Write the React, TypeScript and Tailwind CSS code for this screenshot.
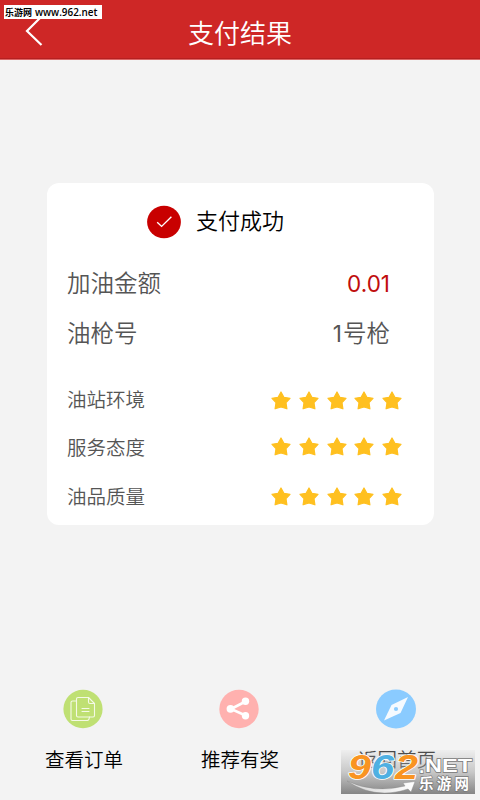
import * as React from "react"
import clsx from "clsx"

const ratings = [
  { label: "油站环境", height: "h-[47px]", starOffset: "pt-[3px]" },
  { label: "服务态度", height: "h-[49px]", starOffset: "pt-0" },
  { label: "油品质量", height: "h-[49px]", starOffset: "pt-px" },
]

function Star() {
  return (
    <svg viewBox="0 0 20 19" className="h-[19px] w-5" fill="#ffc020" stroke="#ffc020" strokeWidth="1.2" strokeLinejoin="round">
      <path d="M10 1 12.9 6.3 19 7.3 15 11.7 15.9 17.8 10 16 4.1 17.8 5 11.7 1 7.3 7.1 6.3Z" />
    </svg>
  )
}

function CheckBadge() {
  return (
    <svg viewBox="0 0 34 34" className="mt-0.5 size-[34px]" fill="none">
      <ellipse cx="17" cy="17" rx="16.9" ry="16.2" fill="#c80000" />
      <path d="M10.2 17.2 14.6 21.4 24.4 11.8" stroke="#fff" strokeWidth="1.4" />
    </svg>
  )
}

function OrdersIcon() {
  return (
    <svg viewBox="0 0 40 40" className="size-10" fill="none">
      <ellipse cx="20" cy="20" rx="19.6" ry="19.2" fill="#bfe073" />
      <g stroke="#f4f9e6" strokeWidth="1.1" strokeLinejoin="round" strokeLinecap="round">
        <path d="M13 12H9.5Q8 12 8 13.5V30Q8 31.5 9.5 31.5H24.5Q26 31.5 26.5 28" />
        <path d="M15 8.5H25.5L31.5 14.5V26.5Q31.5 28 30 28H15Q13.5 28 13.5 26.5V10Q13.5 8.5 15 8.5Z" />
        <path d="M25.5 8.5V13Q25.5 14.5 27 14.5H31.5M19 19.5H26M19 22.5H26" />
      </g>
    </svg>
  )
}

function ShareIcon() {
  return (
    <svg viewBox="0 0 40 40" className="size-10">
      <ellipse cx="20" cy="20" rx="19.7" ry="19.2" fill="#ffb1af" />
      <path d="M26.5 12.5 12 20 26.5 26.5" fill="none" stroke="#fff" strokeWidth="2.6" />
      <g fill="#fff">
        <circle cx="26.5" cy="12.3" r="3.7" />
        <circle cx="11.5" cy="19.8" r="3.9" />
        <circle cx="26.5" cy="26.8" r="3.7" />
      </g>
    </svg>
  )
}

function CompassIcon() {
  return (
    <svg viewBox="0 0 40 40" className="size-10">
      <ellipse cx="20" cy="20" rx="20" ry="19.5" fill="#8acbff" />
      <path d="M32 8 24.5 24 8 31.5 15.5 16Z" fill="#f5faff" />
      <circle cx="20" cy="20" r="2.1" fill="#8acbff" />
    </svg>
  )
}

function Action({ icon, label, className }: { icon: React.ReactNode; label: string; className?: string }) {
  return (
    <button className={clsx("flex w-[78px] flex-col items-center", className)}>
      <span className="-ml-[3px]">{icon}</span>
      <span className="mt-[15px] text-[19.5px] leading-[30px] whitespace-nowrap text-black">{label}</span>
    </button>
  )
}

function SiteBadge() {
  return (
    <div className="absolute right-[5px] bottom-[6px] h-11 w-[134px] bg-linear-to-b from-[#e4e4e4]/30 via-[#b5b5b5]/70 to-[#858585]">
      <svg viewBox="0 0 134 44" className="size-full overflow-visible">
        <defs>
          <linearGradient id="swoosh" x1="0" x2="1">
            <stop offset="0" stopColor="#fff" stopOpacity="0.6" />
            <stop offset="1" stopColor="#fff" />
          </linearGradient>
        </defs>
        <path d="M6 31Q34 44 64 36L62 33 74 31.5 70 42 67 39Q34 50 6 31Z" fill="url(#swoosh)" stroke="#888" strokeWidth="0.4" />
        <g fontFamily="Liberation Sans" fontWeight="bold" fontStyle="italic" fontSize="35" stroke="#fff" strokeWidth="1.6" paintOrder="stroke" strokeLinejoin="round">
          <text x="7" y="28.5" textLength="23" lengthAdjust="spacingAndGlyphs" fill="#f99422">9</text>
          <text x="30" y="28.5" textLength="23" lengthAdjust="spacingAndGlyphs" fill="#4fb0e2">6</text>
          <text x="54" y="28.5" textLength="23" lengthAdjust="spacingAndGlyphs" fill="#f99422">2</text>
        </g>
        <g fill="#fff" stroke="#777" strokeWidth="1.3" paintOrder="stroke" fontWeight="bold">
          <text x="78" y="23" fontFamily="Liberation Sans" fontSize="19">.</text>
          <text x="84" y="22" fontFamily="Liberation Sans" fontSize="18.5" textLength="47" lengthAdjust="spacingAndGlyphs">NET</text>
          <text x="78" y="39" fontFamily="Noto Sans CJK SC" fontSize="14.5" textLength="50">乐游网</text>
        </g>
      </svg>
    </div>
  )
}

export default function App() {
  return (
    <div className="relative flex h-[800px] w-[480px] flex-col overflow-hidden bg-[#f3f3f3] font-['Noto_Sans_CJK_SC',sans-serif] font-[350]">
      <header className="relative flex h-[60px] shrink-0 items-center justify-center border-b border-[#d66] bg-[#ce2726] pt-1 shadow-[inset_0_-1px_0_#b52020]">
        <svg viewBox="0 0 20 32" className="absolute top-[15px] left-6 h-8 w-5" fill="none" stroke="#fff" strokeWidth="2.2">
          <path d="M17.5 1.5 3 16 17.5 30" />
        </svg>
        <h1 className="text-[26px] leading-9 text-white">支付结果</h1>
      </header>
      <div className="absolute top-[5px] left-1 flex h-[14px] w-[98px] items-center bg-white pl-px text-[9px] leading-none font-bold whitespace-nowrap text-black">
        <span className="w-[30px]">乐游网</span>
        <span className="pt-0.5 font-['Open_Sans',sans-serif] text-[9.9px] font-semibold">www.962.net</span>
      </div>

      <main className="mt-[123px] ml-[47px] h-[342px] w-[387px] shrink-0 rounded-xl bg-white text-[#555]">
        <div className="flex h-[75px] items-center pl-[100px]">
          <CheckBadge />
          <span className="-mt-[3px] ml-[15px] text-[22px] leading-8 text-black">支付成功</span>
        </div>
        <div className="flex h-[50px] items-center justify-between pr-11 pl-5 text-[23.5px]">
          <span>加油金额</span>
          <span className="pt-px font-['Inter',sans-serif] text-[22.5px] font-normal text-[#c00d0d]">0.01</span>
        </div>
        <div className="flex h-[50px] items-center justify-between pr-11 pl-5 text-[23.5px]">
          <span>油枪号</span>
          <span>
            <span className="mr-px font-['Inter',sans-serif] text-[22.5px] font-normal">1</span>号枪
          </span>
        </div>
        <div className="mt-[17px]">
          {ratings.map((r) => (
            <div key={r.label} className={clsx("flex items-center justify-between pr-8 pl-5", r.height)}>
              <span className="text-[19.5px]">{r.label}</span>
              <div className={clsx("flex gap-[7.7px]", r.starOffset)}>
                {[1, 2, 3, 4, 5].map((n) => (
                  <Star key={n} />
                ))}
              </div>
            </div>
          ))}
        </div>
      </main>

      <nav className="mt-[164px] flex items-start pl-[45px]">
        <Action icon={<OrdersIcon />} label="查看订单" />
        <Action icon={<ShareIcon />} label="推荐有奖" className="ml-[78px]" />
        <Action icon={<CompassIcon />} label="返回首页" className="ml-[79px]" />
      </nav>
      <SiteBadge />
    </div>
  )
}
